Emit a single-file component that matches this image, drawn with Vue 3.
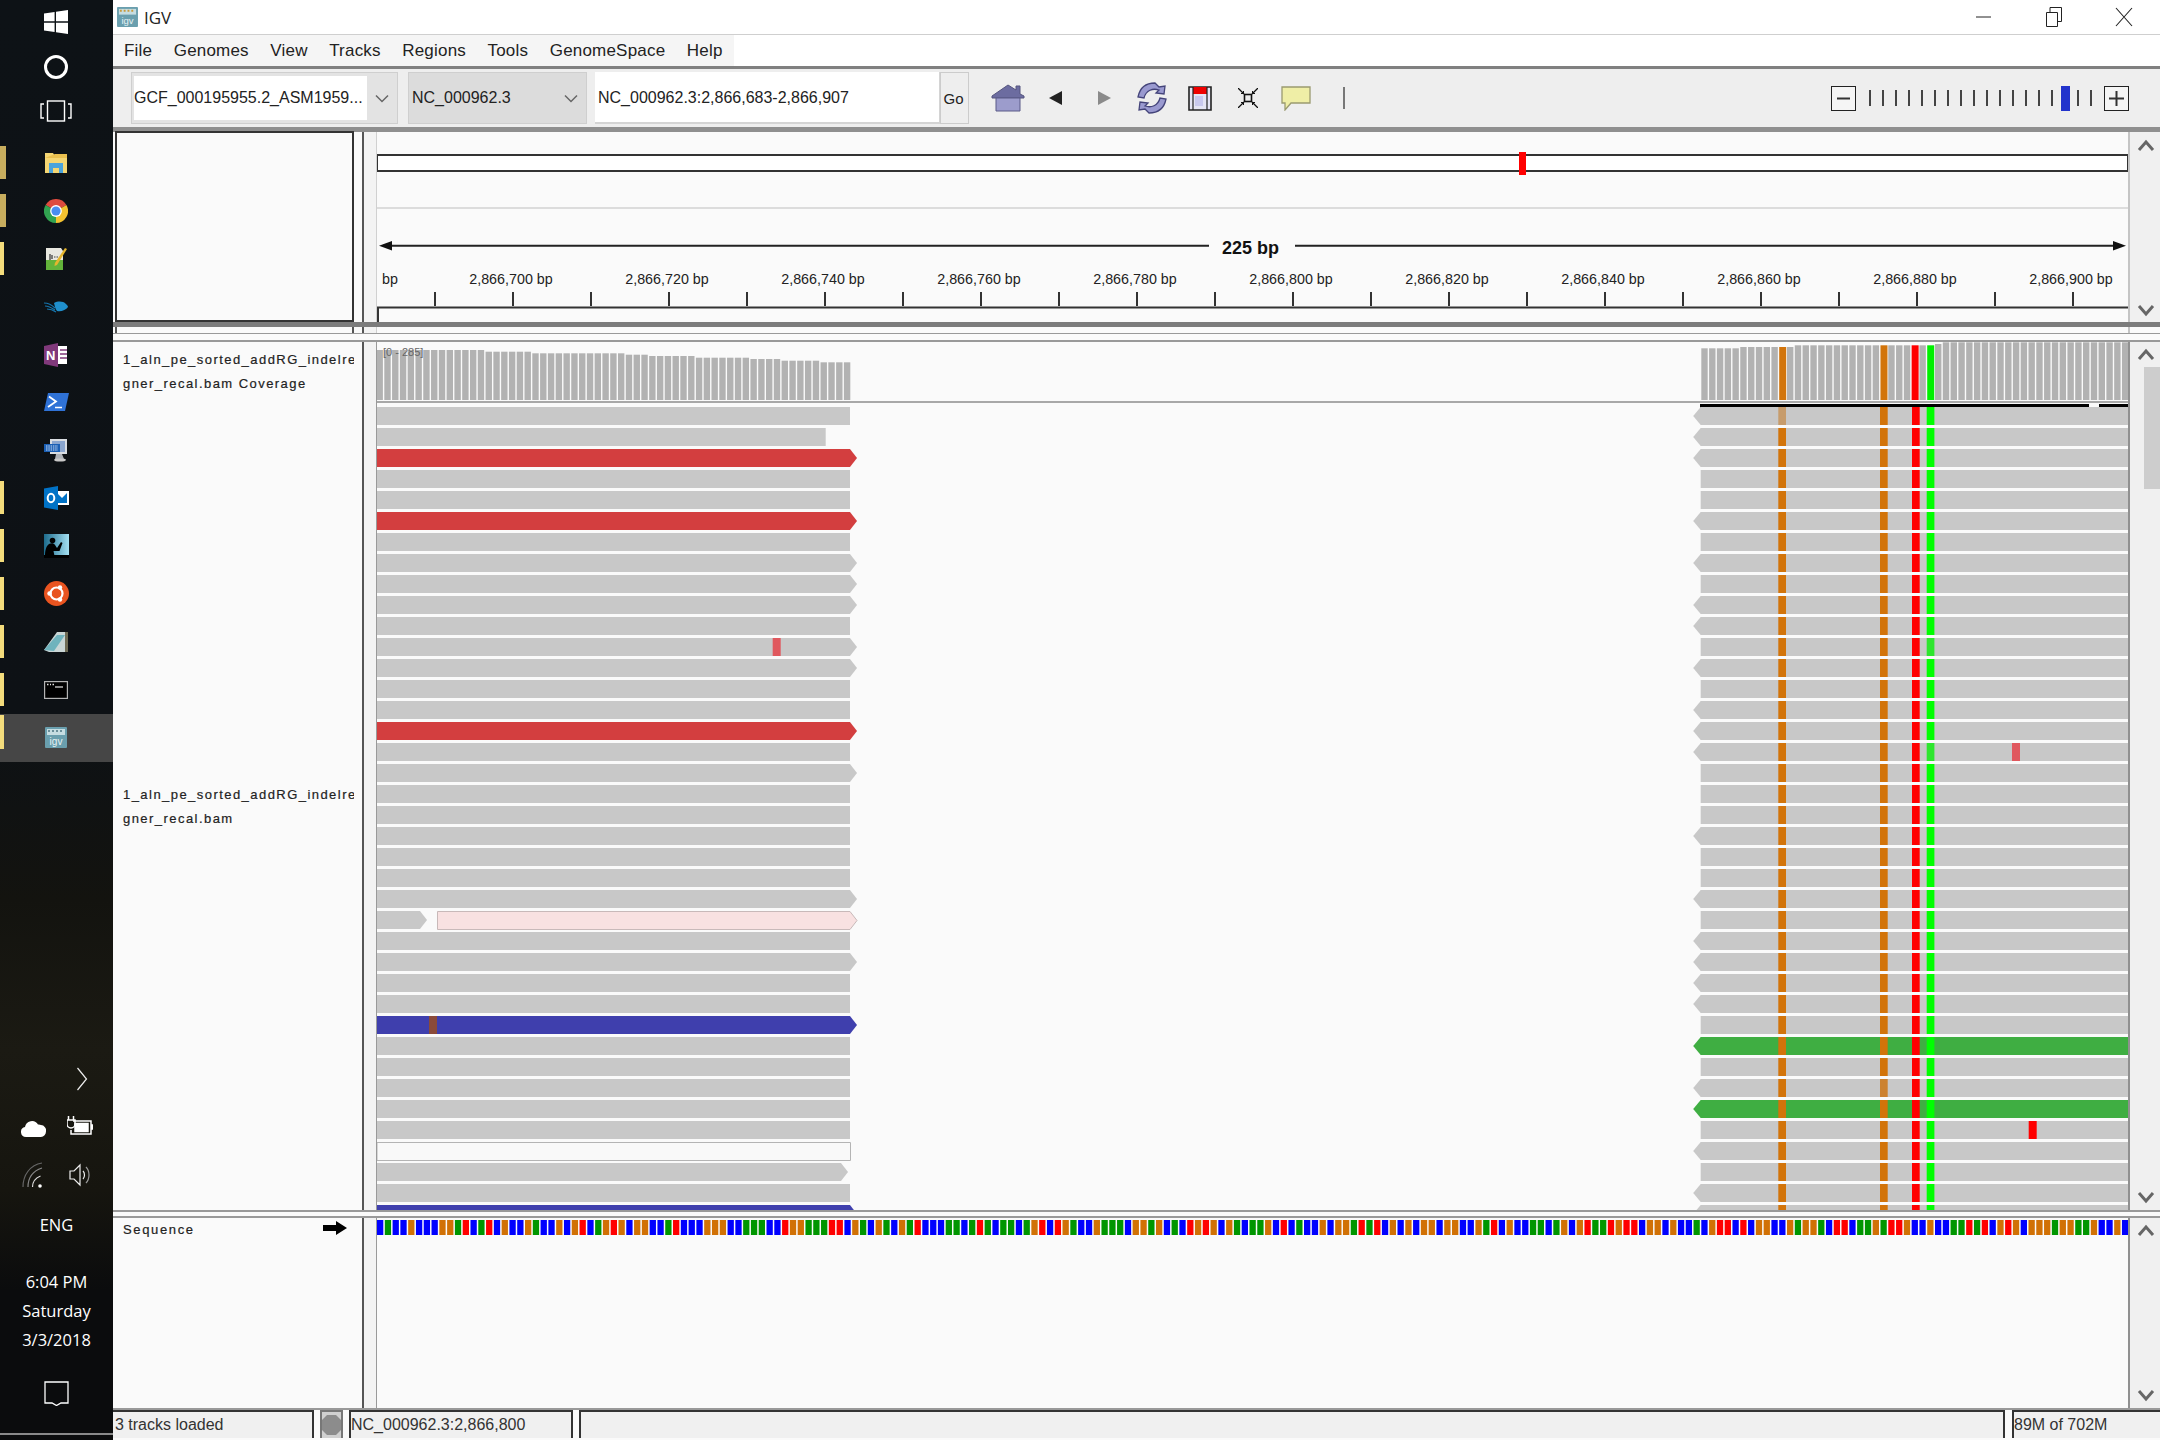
<template>
  <div class="desktop">
    <!-- vertical windows taskbar -->
    <aside class="taskbar">
      <div class="sys-group">
        <div class="sys-btn">
          <svg width="24" height="24" viewBox="0 0 24 24"><path d="M0 3.6 10.6 2v9.3H0zM12 1.8 24 0v11.3H12zM0 12.7h10.6V22L0 20.4zM12 12.7h12V24l-12-1.8z" fill="#fff"/></svg>
        </div>
        <div class="sys-btn">
          <svg width="26" height="26" viewBox="0 0 26 26"><circle cx="13" cy="13" r="10.5" fill="none" stroke="#fff" stroke-width="3"/></svg>
        </div>
        <div class="sys-btn">
          <svg width="32" height="22" viewBox="0 0 32 22" fill="none" stroke="#fff" stroke-width="1.4"><rect x="7.5" y="1" width="17" height="20"/><path d="M4 4H1v14h3M28 4h3v14h-3"/></svg>
        </div>
      </div>
      <div class="pinned">
        <div class="task-btn open gold">
          <svg width="24" height="22" viewBox="0 0 24 22"><path d="M1 1h8l2 3h12v17H1z" fill="#f4d673"/><path d="M1 6h22V2H11z" fill="#e9c04f"/><path d="M5 11h14v10h-4v-5H9v5H5z" fill="#4aa3dc"/></svg>
        </div>
        <div class="task-btn open gold">
          <svg width="24" height="24" viewBox="0 0 22 22"><path d="M11 11 1.47 5.5A11 11 0 0 1 20.53 5.5z" fill="#dd4b3e"/><path d="M11 11 20.53 5.5A11 11 0 0 1 11 22z" fill="#f3c230"/><path d="M11 11 11 22A11 11 0 0 1 1.47 5.5z" fill="#31a350"/><circle cx="11" cy="11" r="5.4" fill="#fff"/><circle cx="11" cy="11" r="4.2" fill="#4a8df0"/></svg>
        </div>
        <div class="task-btn open">
          <svg width="24" height="24" viewBox="0 0 24 24"><path d="M2 1h15l2 3v19H2z" fill="#e8e8e0"/><path d="M2 13h17v10H2z" fill="#62b33a"/><path d="M6 7v6M8 8v4" stroke="#333" stroke-width="1.2"/><path d="M10 10h4" stroke="#444" stroke-width="1.2" stroke-dasharray="1.5 1"/><path d="M21 1 23 2 13 18l-2.500 1 .4-3z" fill="#e5b52e"/></svg>
        </div>
        <div class="task-btn">
          <svg width="24" height="12" viewBox="0 0 24 12"><path d="M10 2c4-2 9-2 12 1 1 1 2 2 2 3-2 3-7 5-11 4-2-2-2-5-3-8z" fill="#1f8fcc"/><path d="M0 2c4 0 8 2 11 5M1 5c3 0 7 2 10 4M3 8c3 0 6 1 9 3" stroke="#1677b0" stroke-width="1.200" fill="none"/></svg>
        </div>
        <div class="task-btn">
          <svg width="24" height="24" viewBox="0 0 24 24"><path d="M13 3h10v18H13z" fill="#fff"/><path d="M16 7h7M16 11h7M16 15h7" stroke="#80397b" stroke-width="1.500"/><path d="M0 3 14 0v24L0 21z" fill="#80397b"/><text x="2" y="17" font-size="13" font-weight="700" fill="#fff" font-family="Liberation Sans, sans-serif">N</text></svg>
        </div>
        <div class="task-btn">
          <svg width="25" height="18" viewBox="0 0 25 18"><path d="M4 0h21l-4 18H0z" fill="#2f72d6"/><path d="M5 3.500 12 8.500 4 14" fill="none" stroke="#fff" stroke-width="1.800"/><path d="M11 14.500h7" stroke="#fff" stroke-width="1.500"/></svg>
        </div>
        <div class="task-btn">
          <svg width="25" height="24" viewBox="0 0 25 24"><path d="M6 1h17v15H6z" fill="#d9dde2"/><path d="M8 3h13v11H8z" fill="#8aa6cf"/><path d="M12 16h6l2 5H11z" fill="#aeb2b8"/><ellipse cx="16" cy="22" rx="6" ry="1.600" fill="#c9c9c9"/><path d="M0 6h16v8H0z" fill="#1a5fb4"/><path d="M2 8h12M2 10h12M2 12h12" stroke="#cfe0f7" stroke-width="1" stroke-dasharray="1.500 .8"/></svg>
        </div>
        <div class="task-btn open">
          <svg width="25" height="24" viewBox="0 0 25 24"><path d="M11 5h14v14H11z" fill="#fff"/><path d="M13 7h10v10H13z" fill="#0072c6"/><path d="M13 7l5 5 5-5z" fill="#fff"/><path d="M0 2.500 14 0v24L0 21.500z" fill="#0072c6"/><ellipse cx="7" cy="12" rx="3.300" ry="4.200" fill="none" stroke="#fff" stroke-width="2"/></svg>
        </div>
        <div class="task-btn open">
          <svg width="25" height="24" viewBox="0 0 25 24"><defs><linearGradient id="kindleSky" x1="0" x2="1"><stop offset="0" stop-color="#1d6c8d"/><stop offset="1" stop-color="#a4e0f2"/></linearGradient></defs><path d="M0 0h25v24H0z" fill="url(#kindleSky)"/><circle cx="8.500" cy="6.500" r="2.800" fill="#000"/><path d="M1 22c0-5 1-10 4-12 2-1 5-1 6 1l2 3 4-6 1.500 1-3 8h-6l1 5z" fill="#000"/><path d="M0 21h25v3H0z" fill="#000"/></svg>
        </div>
        <div class="task-btn open">
          <svg width="25" height="25" viewBox="0 0 25 25"><circle cx="12.500" cy="12.500" r="12.500" fill="#e95420"/><circle cx="12.500" cy="12.500" r="6" fill="none" stroke="#fff" stroke-width="2.200"/><circle cx="5.500" cy="12.500" r="2.200" fill="#fff"/><circle cx="16" cy="6.500" r="2.200" fill="#fff"/><circle cx="16" cy="18.500" r="2.200" fill="#fff"/></svg>
        </div>
        <div class="task-btn open">
          <svg width="25" height="22" viewBox="0 0 25 22"><path d="M0 19 13 1h11v20H5z" fill="#c9d6d6"/><path d="M0 19 13 4h8L10 20z" fill="#6fb3bd"/><path d="M21 1h3v20h-3z" fill="#6e6b55"/></svg>
        </div>
        <div class="task-btn open">
          <svg width="24" height="18" viewBox="0 0 24 18"><rect x=".6" y=".6" width="22.800" height="16.800" fill="#000" stroke="#b4b4b4" stroke-width="1.200"/><path d="M3 3.500h1.500M6 3.500h1M8.500 3.500h1.500" stroke="#e4e4e4" stroke-width="1.600"/><path d="M11 6h8" stroke="#e4e4e4" stroke-width="1.200"/></svg>
        </div>
        <div class="task-btn open active">
          <svg width="22" height="21" viewBox="0 0 22 21"><rect width="22" height="21" rx="1" fill="#6a9fae"/><path d="M2 2h18v6H2z" fill="#c6dde2"/><path d="M3 3h2v2H3zM7 3h2v2H7zM11 3h2v2h-2zM15 3h2v2h-2z" fill="#6a8f9a"/><text x="11" y="18" text-anchor="middle" font-size="10" fill="#e7f2f4" font-family="Liberation Sans, sans-serif">igv</text></svg>
        </div>
      </div>
      <div class="tray">
        <div class="tray-row end">
          <div class="tray-cell">
            <svg width="12" height="24" viewBox="0 0 12 24"><path d="M1.500 1 10.500 12 1.500 23" fill="none" stroke="#eee" stroke-width="1.200"/></svg>
          </div>
        </div>
        <div class="tray-row">
          <div class="tray-cell">
            <svg width="25" height="20" viewBox="0 0 25 20"><path d="M5 20a5 5 0 0 1-1-9.900 7 7 0 0 1 13-2.500 6 6 0 0 1 3 .400A5.500 5.500 0 0 1 25 14.500 5.500 5.500 0 0 1 20 20z" fill="#fff"/></svg>
          </div>
          <div class="tray-cell">
            <svg width="26" height="22" viewBox="0 0 26 22" fill="none" stroke="#fff" stroke-width="1.500"><path d="M6 5h18v13H4v-4"/><path d="M8 7.500h13v8H8z" fill="#fff"/><path d="M24 9h2v4h-2" fill="#fff"/><path d="M1.500 0v4M6.500 0v4M0 4h8v4a4 4 0 0 1-8 0z"/></svg>
          </div>
        </div>
        <div class="tray-row">
          <div class="tray-cell">
            <svg width="22" height="26" viewBox="0 0 22 26" fill="none" stroke-width="1.200"><path d="M1 25C1 13 8 3 20 1" stroke="#666"/><path d="M6 25C6 16 11 9 20 6" stroke="#888"/><path d="M10.500 25c0-6 3-9 8-11" stroke="#ddd"/><circle cx="18" cy="24" r="1.800" fill="#fff" stroke="none"/></svg>
          </div>
          <div class="tray-cell speaker">
            <svg width="24" height="26" viewBox="0 0 24 26" fill="none" stroke="#eee" stroke-width="1.200"><path d="M1 9h4l6-6v20l-6-6H1z"/><path d="M14 9c2 2 2 6 0 8" /><path d="M17 5c4 4 4 12 0 16" stroke="#999"/></svg>
          </div>
        </div>
        <div class="lang">ENG</div>
        <div class="clock">
          <div>6:04 PM</div>
          <div>Saturday</div>
          <div>3/3/2018</div>
        </div>
        <div class="notify">
          <svg width="25" height="25" viewBox="0 0 25 25"><path d="M1 1h23v21h-7l-4.500 2.500L8 22H1z" fill="none" stroke="#fff" stroke-width="1.300"/></svg>
        </div>
      </div>
    </aside>

    <div class="window">
      <header class="titlebar">
        <svg class="app-icon" width="21" height="20" viewBox="0 0 22 21"><rect width="22" height="21" rx="1" fill="#6a9fae"/><path d="M2 2h18v6H2z" fill="#c6dde2"/><path d="M3 3h2v2H3zM7 3h2v2H7zM11 3h2v2h-2zM15 3h2v2h-2z" fill="#c89a3c"/><text x="11" y="18" text-anchor="middle" font-size="10" fill="#e7f2f4" font-family="Liberation Sans, sans-serif">igv</text></svg>
        <span class="app-name">IGV</span>
        <div class="win-buttons">
          <div class="win-btn"><svg width="16" height="16" viewBox="0 0 16 16"><path d="M0 8h15" stroke="#222" stroke-width="1"/></svg></div>
          <div class="win-btn"><svg width="16" height="20" viewBox="0 0 16 20" fill="none" stroke="#222" stroke-width="1"><path d="M.5 5.500h11v14H.5zM4 5.500V.5h11.500v14H11.500"/></svg></div>
          <div class="win-btn"><svg width="18" height="20" viewBox="0 0 18 20"><path d="M1 1 17 19M17 1 1 19" stroke="#222" stroke-width="1.100"/></svg></div>
        </div>
      </header>

      <nav class="menubar">
        <div class="menu-items">
          <span v-for="m in menus" :key="m" class="menu-item">{{ m }}</span>
        </div>
      </nav>

      <div class="toolbar">
        <div class="combo genome">
          <div class="combo-text white">GCF_000195955.2_ASM1959...</div>
          <svg class="chev" width="14" height="9" viewBox="0 0 14 9"><path d="M1 1.500 7 7.500 13 1.500" fill="none" stroke="#666" stroke-width="1.500"/></svg>
        </div>
        <div class="combo chrom">
          <div class="combo-text">NC_000962.3</div>
          <svg class="chev" width="14" height="9" viewBox="0 0 14 9"><path d="M1 1.500 7 7.500 13 1.500" fill="none" stroke="#666" stroke-width="1.500"/></svg>
        </div>
        <div class="locus">NC_000962.3:2,866,683-2,866,907</div>
        <div class="go">Go</div>
        <div class="tools">
          <div class="tool">
            <svg width="34" height="28" viewBox="0 0 34 28"><path d="M1 12 17 1l8 5V2h4v8l4 2v2H1z" fill="#6c6ca0" stroke="#55557f" stroke-width="1"/><path d="M5 14h24v13H5z" fill="#9c9ccc" stroke="#5a5a88" stroke-width="1"/></svg>
          </div>
          <div class="tool">
            <svg width="14" height="14" viewBox="0 0 14 14"><path d="M13 0v14L0 7z" fill="#222"/></svg>
          </div>
          <div class="tool">
            <svg width="14" height="14" viewBox="0 0 14 14"><path d="M1 0v14L14 7z" fill="#8a8a8a"/></svg>
          </div>
          <div class="tool">
            <svg width="34" height="32" viewBox="0 0 34 32" fill="#9a9ad0" stroke="#44447a" stroke-width="1.300"><path d="M20 1l4 4 6-1-1 8-8-1 3-3c-6-2-13 0-15 8l-6-1C5 5 12 1 20 1z"/><path d="M14 31l-4-4-6 1 1-8 8 1-3 3c6 2 13 0 15-8l6 1c-2 10-9 14-17 14z"/></svg>
          </div>
          <div class="tool">
            <svg width="24" height="25" viewBox="0 0 24 25"><path d="M1 1h22v23H1z" fill="#e4e4f4" stroke="#222" stroke-width="1.600"/><path d="M5 1h14v7H5z" fill="#ee0000"/><path d="M7 10h8v10H7z" fill="#c8c8ee"/><path d="M5 1v23M19 1v23" stroke="#222" stroke-width="1.200"/></svg>
          </div>
          <div class="tool">
            <svg width="20" height="20" viewBox="0 0 20 20" fill="none" stroke="#111" stroke-width="1.300"><rect x="6.500" y="6.500" width="7" height="7" stroke-width="1.600"/><path d="M0 0l6 6M20 0l-6 6M0 20l6-6M20 20l-6-6"/><path d="M3 5.500h2.500V3M17 5.500h-2.500V3M3 14.500h2.500V17M17 14.500h-2.500V17" stroke-width="1"/></svg>
          </div>
          <div class="tool">
            <svg width="30" height="25" viewBox="0 0 30 25"><path d="M1 1h28v16H10l-6 7v-7H1z" fill="#efeea6" stroke="#9a9a70" stroke-width="1.300"/></svg>
          </div>
          <div class="tool"><span class="tool-sep"></span></div>
        </div>
        <div class="zoom-ctl">
          <div class="zoom-btn"><svg width="13" height="3" viewBox="0 0 13 3"><path d="M0 1.500h13" stroke="#333" stroke-width="2"/></svg></div>
          <div class="zoom-track">
            <div v-for="n in 18" :key="n" class="zoom-slot">
              <span :class="n === 16 ? 'thumb' : 'notch'"></span>
            </div>
          </div>
          <div class="zoom-btn"><svg width="15" height="15" viewBox="0 0 15 15"><path d="M0 7.500h15M7.500 0v15" stroke="#333" stroke-width="2"/></svg></div>
        </div>
      </div>

      <!-- header panel: chromosome ideogram + ruler -->
      <section class="panel header-panel">
        <div class="name-cell boxed"></div>
        <div class="gutter light"></div>
        <svg class="track-svg" width="1751" height="190" viewBox="0 0 1751 190">
          <rect x="0" y="23" width="1751" height="16" fill="#fff" stroke="#333" stroke-width="2"/>
          <rect x="1142" y="20" width="7" height="23" fill="#ff0000"/>
          <path d="M0 76H1751" stroke="#d2d2d2" stroke-width="1.500"/>
          <path d="M6 113.700H832M918 113.700H1745" stroke="#222" stroke-width="2"/>
          <path d="M2 113.700 15 109V118.500z" fill="#111"/>
          <path d="M1749 113.700 1736 109V118.500z" fill="#111"/>
          <text x="873.500" y="122" text-anchor="middle" class="span-label">225 bp</text>
          <text x="5" y="152" class="ruler-label">bp</text>
          <text v-for="l in rulerLabels" :key="l.text" :x="l.x" y="152" text-anchor="middle" class="ruler-label">{{ l.text }}</text>
          <rect v-for="x in ticks" :key="x" :x="x" y="160" width="2" height="14" fill="#333"/>
          <path d="M0 175.500H1751M1 175.500V190" fill="none" stroke="#333" stroke-width="2"/>
        </svg>
        <div class="scroll light-edge">
          <svg class="arrow" width="18" height="13" viewBox="0 0 18 13"><path d="M2 11 9 3l7 8" fill="none" stroke="#666" stroke-width="3"/></svg>
          <svg class="arrow" width="18" height="13" viewBox="0 0 18 13"><path d="M2 2l7 8 7-8" fill="none" stroke="#666" stroke-width="3"/></svg>
        </div>
      </section>
      <div class="splitter"></div>
      <div class="panel strip">
        <div class="strip-name"></div>
        <div class="gutter light"></div>
        <div></div>
        <div class="strip-scroll"></div>
      </div>
      <div class="strip-gap"></div>

      <!-- alignments panel -->
      <section class="panel data-panel">
        <div class="name-cell labels">
          <div class="track-label">1_aln_pe_sorted_addRG_indelre<br>gner_recal.bam Coverage</div>
          <div class="track-label second">1_aln_pe_sorted_addRG_indelre<br>gner_recal.bam</div>
        </div>
        <div class="gutter"></div>
        <svg class="track-svg" width="1751" height="868" viewBox="0 0 1751 868">
          <rect v-for="b in coverage" :key="b.i" :x="b.x" :y="b.y" :width="b.w" :height="b.h" :fill="b.fill"/>
          <text x="6" y="14" class="cov-range">[0 - 285]</text>
          <rect x="0" y="59" width="1751" height="2" fill="#a8a8a8"/>
          <rect x="1323" y="62" width="389" height="3.500" fill="#000"/>
          <rect x="1722" y="62" width="29" height="3.500" fill="#000"/>
          <polygon v-for="r in reads" :key="r.id" :points="r.points" :fill="r.fill" :stroke="r.stroke" stroke-width="1"/>
          <rect v-for="m in marks" :key="m.id" :x="m.x" :y="m.y" :width="m.w" height="18" :fill="m.fill"/>
        </svg>
        <div class="scroll dark-edge">
          <svg class="arrow" width="18" height="13" viewBox="0 0 18 13"><path d="M2 11 9 3l7 8" fill="none" stroke="#666" stroke-width="3"/></svg>
          <div class="thumb-bar"></div>
          <svg class="arrow down" width="18" height="13" viewBox="0 0 18 13"><path d="M2 2l7 8 7-8" fill="none" stroke="#666" stroke-width="3"/></svg>
        </div>
      </section>
      <div class="seq-gap"></div>

      <!-- sequence panel -->
      <section class="panel seq-panel">
        <div class="name-cell seq-name">
          <span class="track-label">Sequence</span>
          <svg width="24" height="14" viewBox="0 0 24 14"><path d="M0 4h13V0l11 7-11 7v-4H0z" fill="#000"/></svg>
        </div>
        <div class="gutter"></div>
        <svg class="track-svg" width="1751" height="190" viewBox="0 0 1751 190">
          <rect v-for="b in bases" :key="b.i" :x="b.x" y="2" width="6.300" height="15" :fill="b.fill"/>
        </svg>
        <div class="scroll dark-edge">
          <svg class="arrow" width="18" height="13" viewBox="0 0 18 13"><path d="M2 11 9 3l7 8" fill="none" stroke="#666" stroke-width="3"/></svg>
          <svg class="arrow" width="18" height="13" viewBox="0 0 18 13"><path d="M2 2l7 8 7-8" fill="none" stroke="#666" stroke-width="3"/></svg>
        </div>
      </section>

      <footer class="statusbar">
        <div class="stat s-msg">3 tracks loaded</div>
        <div class="stat s-led"><svg width="19" height="22" viewBox="0 0 19 22"><path d="M5 1h9l5 5v10l-5 5H5l-5-5V6z" fill="#8c8c8c"/></svg></div>
        <div class="stat s-pos">NC_000962.3:2,866,800</div>
        <div class="stat s-blank"></div>
        <div class="stat s-mem">89M of 702M</div>
      </footer>
    </div>
  </div>
</template>

<script setup>
const menus = ['File', 'Genomes', 'View', 'Tracks', 'Regions', 'Tools', 'GenomeSpace', 'Help']

const BP = 7.79
const ROW_H = 18
const rowY = (n) => 65 + 21 * n

// ruler
const ticks = []
for (let i = 0; i < 22; i++) ticks.push(57 + i * 78)
const rulerLabels = []
for (let i = 0; i < 11; i++) {
  rulerLabels.push({ x: 134 + i * 156, text: '2,866,' + (700 + i * 20) + ' bp' })
}

// coverage bars, tops are read from the screenshot
const covColors = { 180: '#d2740a', 193: '#d2740a', 197: '#ff0000', 199: '#00f000' }
function leftTop(i) {
  if (i < 14) return 350
  if (i < 20) return 351.7
  if (i < 32) return 353.3
  if (i < 35) return 354.7
  if (i < 41) return 356
  if (i < 48) return 357.7
  if (i < 52) return 359
  if (i < 57) return 360.7
  return 362.3
}
function rightTop(i) {
  if (i < 175) return 348.3
  if (i < 182) return 347
  if (i < 200) return 345.3
  if (i < 201) return 344
  return 342.3
}
const coverage = []
for (let i = 0; i < 61; i++) {
  const top = leftTop(i)
  coverage.push({ i, x: i * BP - 0.5, y: top - 342, w: 6.4, h: 400 - top, fill: '#b2b2b2' })
}
for (let i = 170; i < 225; i++) {
  const top = rightTop(i)
  coverage.push({ i, x: i * BP, y: top - 342, w: i in covColors ? 7 : 6.4, h: 400 - top, fill: covColors[i] || '#b2b2b2' })
}

// reads
const GRAY = '#c8c8c8'
const RED = '#d33e3f'
const BLUE = '#3f3fad'
const GREEN = '#3fae42'

function rightPoints(x0, x1, y, tip) {
  if (!tip) return `${x0},${y} ${x1},${y} ${x1},${y + ROW_H} ${x0},${y + ROW_H}`
  return `${x0},${y} ${x1},${y} ${x1 + 7},${y + ROW_H / 2} ${x1},${y + ROW_H} ${x0},${y + ROW_H}`
}
function leftPoints(x0, x1, y, tip) {
  if (!tip) return `${x0},${y} ${x1},${y} ${x1},${y + ROW_H} ${x0},${y + ROW_H}`
  return `${x0},${y} ${x1},${y} ${x1},${y + ROW_H} ${x0},${y + ROW_H} ${x0 - 7.500},${y + ROW_H / 2}`
}

const leftColors = { 2: RED, 5: RED, 15: RED, 29: BLUE, 38: BLUE }
const leftArrows = [2, 5, 7, 8, 9, 11, 12, 15, 17, 23, 26, 29, 38]
const rightColors = { 30: GREEN, 33: GREEN }
const rightArrows = [0, 1, 2, 5, 7, 9, 10, 12, 14, 15, 16, 20, 23, 25, 26, 27, 28, 30, 32, 33, 35, 37, 38]

const reads = []
for (let n = 0; n < 39; n++) {
  const y = rowY(n)
  const base = { id: 'l' + n, fill: leftColors[n] || GRAY, stroke: 'none' }
  if (n === 1) {
    reads.push({ ...base, points: rightPoints(0, 448.7, y, false) })
  } else if (n === 24) {
    reads.push({ ...base, points: rightPoints(0, 43, y, true) })
    reads.push({ id: 'pink', fill: '#f8e1e1', stroke: '#c8b9b9', points: rightPoints(60.5, 473, y + 0.5, true) })
  } else if (n === 35) {
    reads.push({ ...base, fill: '#f9f9f9', stroke: '#b4b4b4', points: rightPoints(0, 473.5, y + 0.5, false) })
  } else if (n === 36) {
    reads.push({ ...base, points: rightPoints(0, 464, y, true) })
  } else {
    reads.push({ ...base, points: rightPoints(leftColors[n] ? -1 : 0, 473, y, leftArrows.includes(n)) })
  }
  reads.push({
    id: 'r' + n,
    fill: rightColors[n] || GRAY,
    stroke: 'none',
    points: leftPoints(1323.7, 1751, y, rightArrows.includes(n))
  })
}

// mismatched bases drawn over the reads
const marks = [
  { id: 'm1', x: 395.7, y: rowY(11), w: 8, fill: '#e0585e' },
  { id: 'm2', x: 52, y: rowY(29), w: 8, fill: '#8a4a3a' },
  { id: 'm3', x: 1635, y: rowY(16), w: 8, fill: '#e0585e' },
  { id: 'm4', x: 1651.7, y: rowY(34), w: 8, fill: '#ff0000' }
]
for (let n = 0; n < 39; n++) {
  const y = rowY(n)
  marks.push({ id: 'a' + n, x: 1401.3, y, w: 7.7, fill: n === 0 ? '#c79c6c' : '#d2740a' })
  marks.push({ id: 'b' + n, x: 1503, y, w: 7.7, fill: n === 32 ? '#cc8230' : '#d2740a' })
  marks.push({ id: 'c' + n, x: 1535, y, w: 7.7, fill: '#ff0000' })
  marks.push({ id: 'd' + n, x: 1549.7, y, w: 7.7, fill: n === 11 || n === 16 ? '#2ee62e' : '#00ff00' })
}

// reference sequence, one letter per colour
const seq =
  'BGBBOBBBOOGRBGRBOBBOGBBOBORBGOROBOOBB' +
  'GRBBBOOOBBGGGBBROOGGGRRBOGBOGBOGRBBBGGBGRGBGGBGORBROGBBOGGGBOOGOB' +
  'GBROROBOGBGGOBRBGBBOBOOGRGRBOBOBOOBOOBBOGRBOBBGGBGOBORGGRORRBOOBO' +
  'BBGBORRBRBOOBBOGOOGBRRBGGOGRROBBOBBGGRGRBOROBOOOGOOGGOBBOB'
const seqColors = { B: '#0000ff', G: '#009600', O: '#d17105', R: '#ff0000' }
const bases = seq.split('').map((c, i) => ({ i, x: i * BP, fill: seqColors[c] }))
</script>

<style scoped>
.desktop {
  display: flex;
  width: 2160px;
  height: 1440px;
  overflow: hidden;
  font-family: "Liberation Sans", Arial, sans-serif;
  background: #fafafa;
}

/* taskbar */
.taskbar {
  width: 113px;
  flex: none;
  display: flex;
  flex-direction: column;
  background: linear-gradient(180deg, #0d1216 0, #0d1115 720px, #13130f 900px, #1b1a13 1050px, #16150f 1190px, #0b0c0d 1290px, #0b0c0d 1440px);
  color: #fff;
  font-family: "Open Sans", sans-serif;
}
.sys-btn {
  height: 44.5px;
  padding-right: 1px;
  display: flex;
  align-items: center;
  justify-content: center;
}
.pinned {
  padding-top: 5.5px;
}
.task-btn {
  position: relative;
  height: 47.9px;
  padding-right: 1px;
  display: flex;
  align-items: center;
  justify-content: center;
}
.task-btn.open::before {
  content: "";
  position: absolute;
  left: 0;
  top: 7px;
  width: 4px;
  height: 33px;
  background: #f3dc7c;
}
.task-btn.gold::before {
  width: 6px;
  background: #c7ad5e;
}
.task-btn.active {
  background: #464646;
}
.task-btn.active::before {
  top: 1px;
  height: 34px;
}
.tray {
  margin-top: auto;
  padding-bottom: 5px;
}
.tray::after {
  content: "";
  display: block;
  height: 2px;
  background: #8a8a8a;
}
.tray-row {
  height: 48px;
  padding: 0 9.5px;
  display: flex;
}
.tray-row.end {
  justify-content: flex-end;
  padding-right: 8px;
}
.tray-cell {
  width: 47px;
  display: flex;
  align-items: center;
  justify-content: center;
}
.tray-cell.speaker {
  padding-left: 2px;
}
.lang {
  height: 52px;
  line-height: 52px;
  text-align: center;
  font-size: 16.5px;
}
.clock {
  padding-top: 16px;
  text-align: center;
  font-size: 16.5px;
  line-height: 29px;
}
.notify {
  height: 48px;
  margin-top: 15px;
  margin-bottom: 16px;
  display: flex;
  align-items: center;
  justify-content: center;
}

/* window chrome */
.window {
  flex: 1;
  min-width: 0;
  display: flex;
  flex-direction: column;
}
.titlebar {
  height: 35px;
  box-sizing: border-box;
  display: flex;
  align-items: center;
  background: #fff;
  border-bottom: 1px solid #cfcfcf;
}
.app-icon {
  margin-left: 4px;
}
.app-name {
  margin-left: 6px;
  font-family: "Open Sans", sans-serif;
  font-size: 17px;
  color: #222;
}
.win-buttons {
  margin-left: auto;
  margin-right: 1px;
  display: flex;
  align-items: center;
}
.win-btn {
  width: 70px;
  display: flex;
  align-items: center;
  justify-content: center;
}
.menubar {
  height: 34px;
  box-sizing: border-box;
  background: #fff;
  border-bottom: 3px solid #808080;
  display: flex;
}
.menu-items {
  display: flex;
  align-items: center;
  width: 621px;
  padding-left: 11px;
  box-sizing: border-box;
  background: #f5f5f5;
  font-size: 17px;
  letter-spacing: 0.2px;
  color: #222;
}
.menu-item {
  margin-right: 21.5px;
}
.toolbar {
  height: 63px;
  box-sizing: border-box;
  display: flex;
  align-items: center;
  padding: 3px 31px 3px 18px;
  background: #eeeeee;
  border-bottom: 5px solid #8f8f8f;
  font-size: 16px;
  color: #222;
}
.combo {
  height: 52px;
  box-sizing: border-box;
  display: flex;
  align-items: center;
  border: 1px solid #cfcfcf;
  background: #e3e3e3;
}
.combo.genome {
  width: 267px;
}
.combo.chrom {
  width: 179px;
  margin-left: 10px;
  background: #dcdcdc;
}
.combo-text {
  flex: 1;
  height: 44px;
  line-height: 44px;
  padding-left: 3px;
  white-space: nowrap;
}
.combo-text.white {
  background: #fff;
  margin-left: 2px;
  padding-left: 0;
}
.chev {
  margin: 0 8px;
  flex: none;
}
.locus {
  width: 345px;
  height: 52px;
  line-height: 52px;
  box-sizing: border-box;
  margin-left: 8px;
  padding-left: 3px;
  background: #fff;
  border: 1px solid #d4d4d4;
  border-width: 0 1px 2px 0;
}
.go {
  width: 29px;
  height: 52px;
  line-height: 52px;
  text-align: center;
  box-sizing: border-box;
  border: 1px solid #cccccc;
  padding-right: 2px;
  font-size: 15px;
}
.tools {
  display: flex;
  margin-left: 15px;
}
.tool {
  width: 48px;
  display: flex;
  align-items: center;
  justify-content: center;
}
.tool-sep {
  width: 2px;
  height: 22px;
  background: #777;
}
.zoom-ctl {
  margin-left: auto;
  display: flex;
  align-items: center;
}
.zoom-btn {
  width: 25px;
  height: 25px;
  box-sizing: border-box;
  border: 1.5px solid #222;
  background: #f5f5f5;
  display: flex;
  align-items: center;
  justify-content: center;
}
.zoom-track {
  display: flex;
  align-items: center;
  margin: 0 6.5px 0 7.5px;
}
.zoom-slot {
  width: 13px;
  display: flex;
  justify-content: center;
}
.notch {
  width: 2px;
  height: 16px;
  background: #444;
}
.thumb {
  width: 9px;
  height: 25px;
  background: #2233cc;
}

/* panels */
.panel {
  display: grid;
  grid-template-columns: 241px 23px 1751px 32px;
  background: #fafafa;
}
.header-panel {
  height: 190px;
}
.data-panel {
  height: 868px;
}
.seq-panel {
  height: 190px;
}
.name-cell {
  min-width: 0;
  overflow: hidden;
}
.name-cell.boxed {
  margin: -1px 0 0 2px;
  border: 2px solid #333;
}
.gutter {
  margin-left: 8px;
  background: #f3f3f3;
  border-left: 2px solid #555;
  border-right: 1px solid #999;
}
.gutter.light {
  border-right-color: #d0d0d0;
}
.track-svg {
  display: block;
  overflow: hidden;
}
.span-label {
  font-size: 18px;
  font-weight: 700;
  fill: #111;
}
.ruler-label {
  font-size: 14.3px;
  fill: #222;
}
.cov-range {
  font-size: 11px;
  fill: #666;
}
.scroll {
  box-sizing: border-box;
  background: #f0f0f0;
  display: flex;
  flex-direction: column;
  justify-content: space-between;
  align-items: center;
}
.header-panel .scroll {
  padding: 7px 0 5px 2px;
}
.light-edge {
  border-left: 2px solid #c4c4c4;
}
.dark-edge {
  border-left: 2px solid #909090;
  padding: 6px 0 6px 2px;
}
.data-panel .scroll {
  justify-content: flex-start;
}
.arrow {
  flex: none;
}
.arrow.down {
  margin-top: auto;
}
.thumb-bar {
  height: 122px;
  margin: 6px 0 0 12px;
  background: #cdcdcd;
  align-self: stretch;
}
.splitter {
  height: 5px;
  background: #7c7c7c;
}
.strip {
  height: 7px;
  box-sizing: border-box;
  border-bottom: 1px solid #999;
}
.strip-name {
  margin-left: 2px;
  border-left: 2px solid #555;
  border-right: 2px solid #555;
}
.strip-scroll {
  border-left: 2px solid #c4c4c4;
}
.strip-gap {
  height: 8px;
  box-sizing: border-box;
  border-bottom: 2px solid #999;
  background: #fafafa;
}
.labels {
  padding: 6px 0 0 10px;
}
.track-label {
  font-size: 13px;
  line-height: 24px;
  letter-spacing: 1.45px;
  color: #222;
  -webkit-text-stroke: 0.2px #222;
  white-space: nowrap;
}
.track-label.second {
  margin-top: 387px;
}
.seq-gap {
  height: 8px;
  box-sizing: border-box;
  background: #fafafa;
  border-top: 2px solid #999;
  border-bottom: 2px solid #999;
}
.seq-name {
  display: flex;
  justify-content: space-between;
  align-items: flex-start;
  padding: 0 7px 0 10px;
}
.seq-name .track-label {
  letter-spacing: 1.65px;
}
.seq-name svg {
  margin-top: 3px;
}

/* status bar */
.statusbar {
  height: 30px;
  box-sizing: border-box;
  border-top: 2px solid #999;
  background: #fafafa;
  display: flex;
  gap: 6px;
}
.stat {
  box-sizing: border-box;
  background: #f0f0f0;
  border: 2px solid #333;
  border-bottom: 0;
  font-size: 16px;
  line-height: 25px;
  color: #333;
  white-space: nowrap;
}
.s-msg {
  width: 201px;
  border-left: 0;
  padding-left: 2px;
}
.s-led {
  width: 23px;
  border-color: #777;
  background: #d0d0d0;
  display: flex;
  align-items: center;
  justify-content: center;
}
.s-pos {
  width: 224px;
}
.s-blank {
  width: 1426px;
}
.s-mem {
  width: 148px;
  margin-left: 1px;
  border-right: 0;
}
</style>

<style>
html,
body {
  margin: 0;
  background: #fafafa;
}
</style>
